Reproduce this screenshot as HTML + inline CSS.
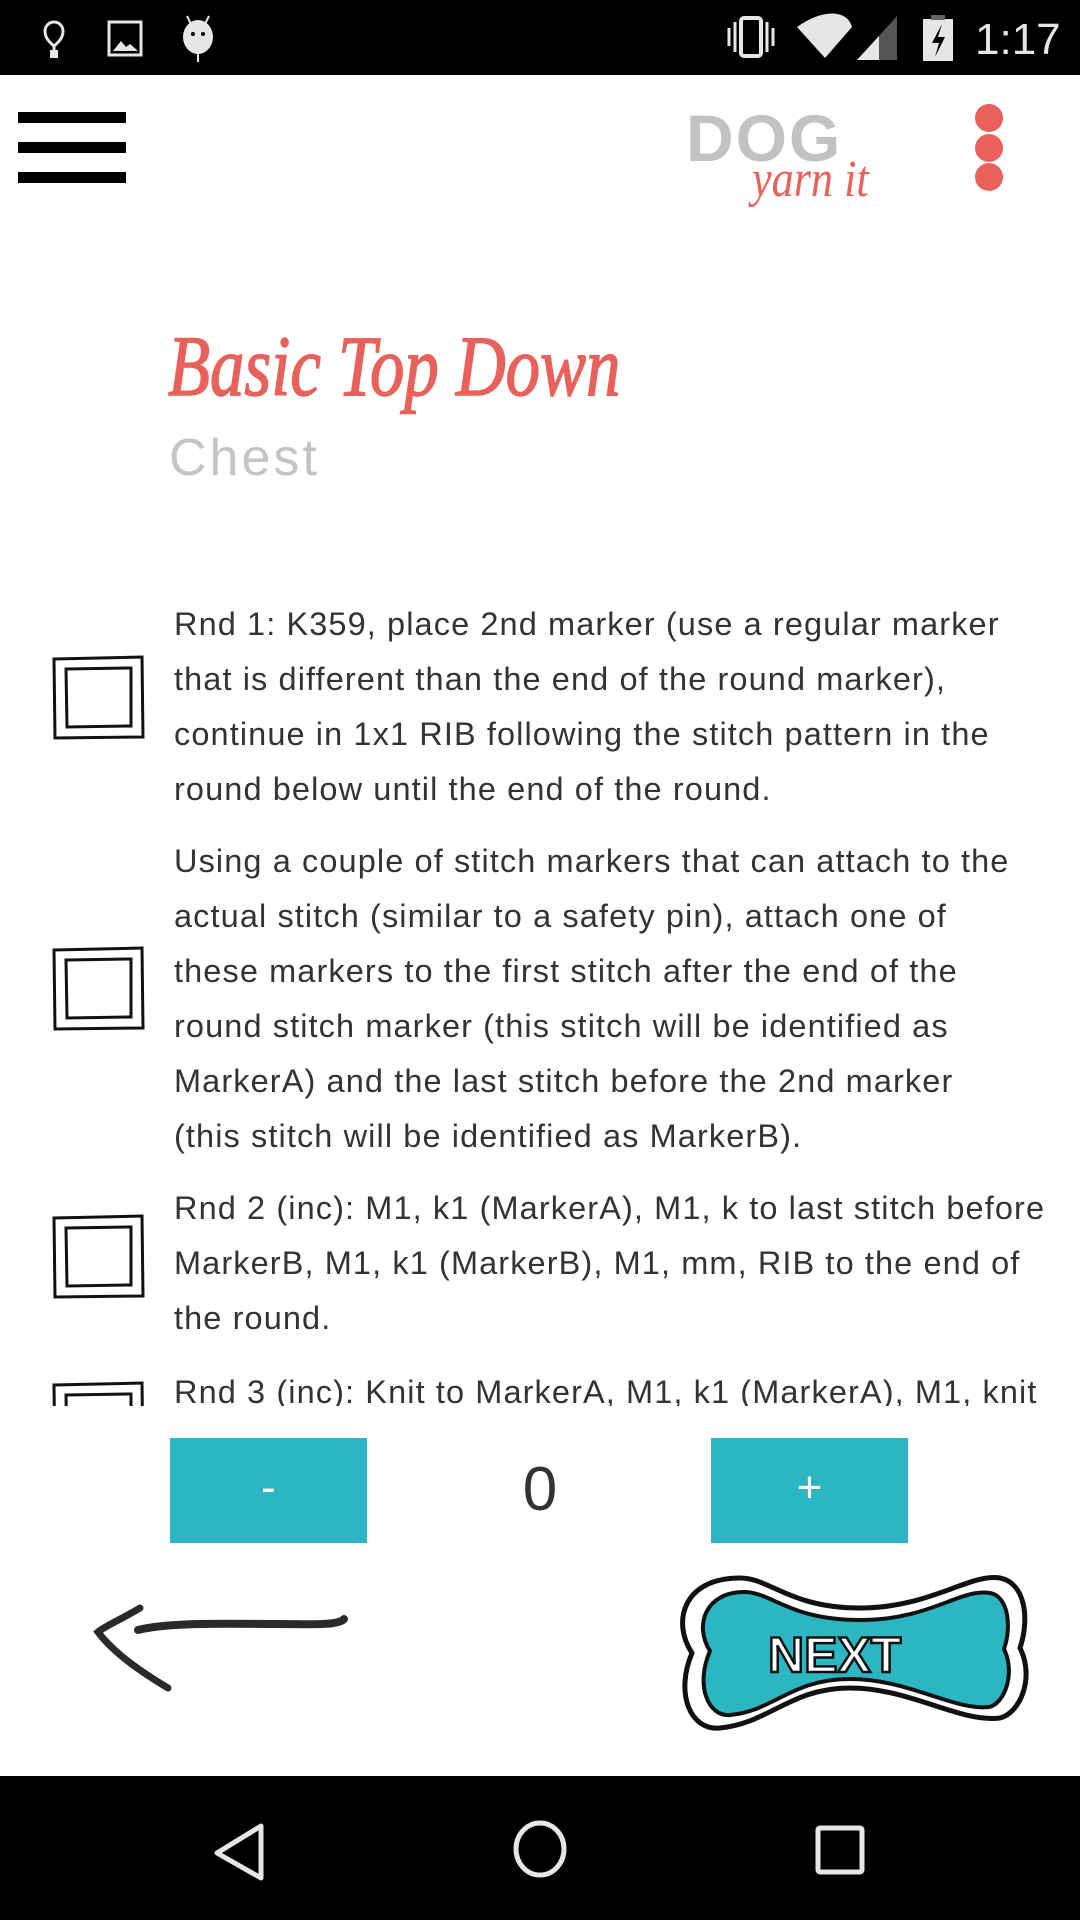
<!DOCTYPE html>
<html><head><meta charset="utf-8">
<style>
*{margin:0;padding:0;box-sizing:border-box}
body{width:1080px;height:1920px;background:#fff;position:relative;overflow:hidden;font-family:"Liberation Sans",sans-serif}
.abs{position:absolute}
.sb{left:0;top:0;width:1080px;height:75px;background:#000}
.nav{left:0;top:1776px;width:1080px;height:144px;background:#000}
.bar{left:18px;width:108px;height:11px;background:#000}
.dot{width:28px;height:28px;border-radius:50%;background:#e8615a;left:975px}
.p{left:174px;font-size:32.5px;line-height:55px;color:#333;white-space:nowrap;letter-spacing:1.1px}
.btn{top:1438px;width:197px;height:105px;background:#2bb6c1;color:#fff;font-size:44px;text-align:center;line-height:100px}
</style></head><body>
<div class="abs sb"></div>
<svg class="abs" style="left:0;top:0" width="1080" height="75">
 <g fill="none" stroke="#e6e6e6" stroke-width="3">
  <path d="M54 52v-6c-6-5-9-9-9-15a9 9 0 0 1 18 0c0 6-3 10-9 15"/>
  <path d="M109 22h32v33h-32z"/>
 </g>
 <rect x="50" y="50" width="8" height="8" fill="#e6e6e6"/>
 <path d="M113 51l8-10 5 6 4-3 8 7z" fill="#e6e6e6"/>
 <ellipse cx="198" cy="37" rx="15" ry="17" fill="#e6e6e6"/>
 <rect x="197" y="50" width="2" height="12" fill="#e6e6e6"/>
 <path d="M187 16l4 8M209 16l-4 8" stroke="#e6e6e6" stroke-width="2"/>
 <circle cx="193" cy="34" r="2" fill="#000"/><circle cx="203" cy="34" r="2" fill="#000"/>
 <rect x="741" y="18" width="20" height="38" rx="3" fill="none" stroke="#e6e6e6" stroke-width="4"/>
 <path d="M729 28v18M735 22v30M767 22v30M773 28v18" stroke="#e6e6e6" stroke-width="3"/>
 <path d="M797 27c25-18 50-18 55 0l-27 31z" fill="#e6e6e6"/>
 <path d="M857 60l40-44v44z" fill="#555"/><path d="M857 60l22-24v24z" fill="#e6e6e6"/>
 <rect x="923" y="19" width="30" height="42" fill="#e6e6e6"/><rect x="931" y="15" width="14" height="5" fill="#666"/>
 <path d="M942 24l-10 19h7l-4 14 10-20h-7z" fill="#000"/>
 <text x="975" y="54" fill="#e6e6e6" font-size="44" font-family="Liberation Sans">1:17</text>
</svg>
<div class="abs bar" style="top:112px"></div>
<div class="abs bar" style="top:142px"></div>
<div class="abs bar" style="top:172px"></div>
<div class="abs" style="left:686px;top:100px;font-size:66px;font-weight:bold;color:#c2c2c2;letter-spacing:2px;line-height:76px">DOG</div>
<div class="abs" style="left:752px;top:150px;font-size:52px;font-style:italic;font-family:'Liberation Serif',serif;color:#e8615a;line-height:60px;transform:scaleX(0.85);transform-origin:left">yarn it</div>
<div class="abs dot" style="top:104px"></div>
<div class="abs dot" style="top:134px"></div>
<div class="abs dot" style="top:163px"></div>
<div class="abs" style="left:168px;top:316px;font-size:86px;font-family:'Liberation Serif',serif;font-style:italic;color:#e8615a;line-height:100px;white-space:nowrap;transform:scaleX(0.8);transform-origin:left;-webkit-text-stroke:1.5px #e8615a">Basic Top Down</div>
<div class="abs" style="left:169px;top:428px;font-size:52px;color:#c4c4c4;line-height:60px;letter-spacing:3px">Chest</div>
<svg class="abs" style="left:0;top:0" width="1080" height="1406">
 <g fill="none" stroke="#111" stroke-width="3">
  <path d="M54 659l88-2 1 80-88 1z"/><path d="M66 669l65-1v58l-64 1z"/>
  <path d="M54 950l88-2 1 80-88 1z"/><path d="M66 960l65-1v58l-64 1z"/>
  <path d="M54 1218l88-2 1 80-88 1z"/><path d="M66 1228l65-1v58l-64 1z"/>
  <path d="M54 1385l88-2 1 80-88 1z"/><path d="M66 1395l65-1v58l-64 1z"/>
 </g>
</svg>
<div class="abs" style="left:0;top:0;width:1080px;height:1406px;overflow:hidden">
<div class="abs p" style="top:597px">Rnd 1: K359, place 2nd marker (use a regular marker<br>that is different than the end of the round marker),<br>continue in 1x1 RIB following the stitch pattern in the<br>round below until the end of the round.</div>
<div class="abs p" style="top:834px">Using a couple of stitch markers that can attach to the<br>actual stitch (similar to a safety pin), attach one of<br>these markers to the first stitch after the end of the<br>round stitch marker (this stitch will be identified as<br>MarkerA) and the last stitch before the 2nd marker<br>(this stitch will be identified as MarkerB).</div>
<div class="abs p" style="top:1181px">Rnd 2 (inc): M1, k1 (MarkerA), M1, k to last stitch before<br>MarkerB, M1, k1 (MarkerB), M1, mm, RIB to the end of<br>the round.</div>
<div class="abs p" style="top:1365px">Rnd 3 (inc): Knit to MarkerA, M1, k1 (MarkerA), M1, knit</div>
</div>
<div class="abs btn" style="left:170px">-</div>
<div class="abs btn" style="left:711px">+</div>
<div class="abs" style="left:500px;top:1455px;width:80px;text-align:center;font-size:62px;color:#333;line-height:70px">0</div>
<svg class="abs" style="left:0;top:1560px" width="1080" height="200">
 <path d="M140 48c-20 12-35 18-42 24 15 20 40 38 70 56" fill="none" stroke="#2a2a2a" stroke-width="7" stroke-linecap="round"/>
 <path d="M138 70c30-8 90-6 140-6 30 0 60 2 66-5" fill="none" stroke="#2a2a2a" stroke-width="8" stroke-linecap="round"/>
 <path d="M740 18c30 0 50 30 120 30s110-35 140-30c25 5 30 40 20 70 15 30 0 65-20 70-40 5-90-30-150-30s-80 35-130 40c-30 3-45-35-28-75-20-30-10-75 48-75z" fill="#fff" stroke="#111" stroke-width="5"/>
 <path d="M744 32c28 0 45 28 116 28s100-32 130-27c18 3 22 33 14 56 12 25 0 55-15 58-35 4-80-28-139-28s-76 32-120 36c-22 2-35-30-20-64-16-25-5-59 34-59z" fill="#2bb6c1" stroke="#111" stroke-width="4"/>
 <text x="768" y="112" font-size="50" font-weight="bold" fill="#fff" stroke="#111" stroke-width="2.5" font-family="Liberation Sans">NEXT</text>
</svg>
<div class="abs nav"></div>
<svg class="abs" style="left:0;top:1776px" width="1080" height="144">
 <g fill="none" stroke="#e6e6e6" stroke-width="5" stroke-linejoin="round">
  <path d="M261 50v52l-44-25z"/>
  <ellipse cx="540" cy="73" rx="24" ry="26"/>
  <rect x="818" y="52" width="44" height="44" rx="2"/>
 </g>
</svg>
</body></html>
